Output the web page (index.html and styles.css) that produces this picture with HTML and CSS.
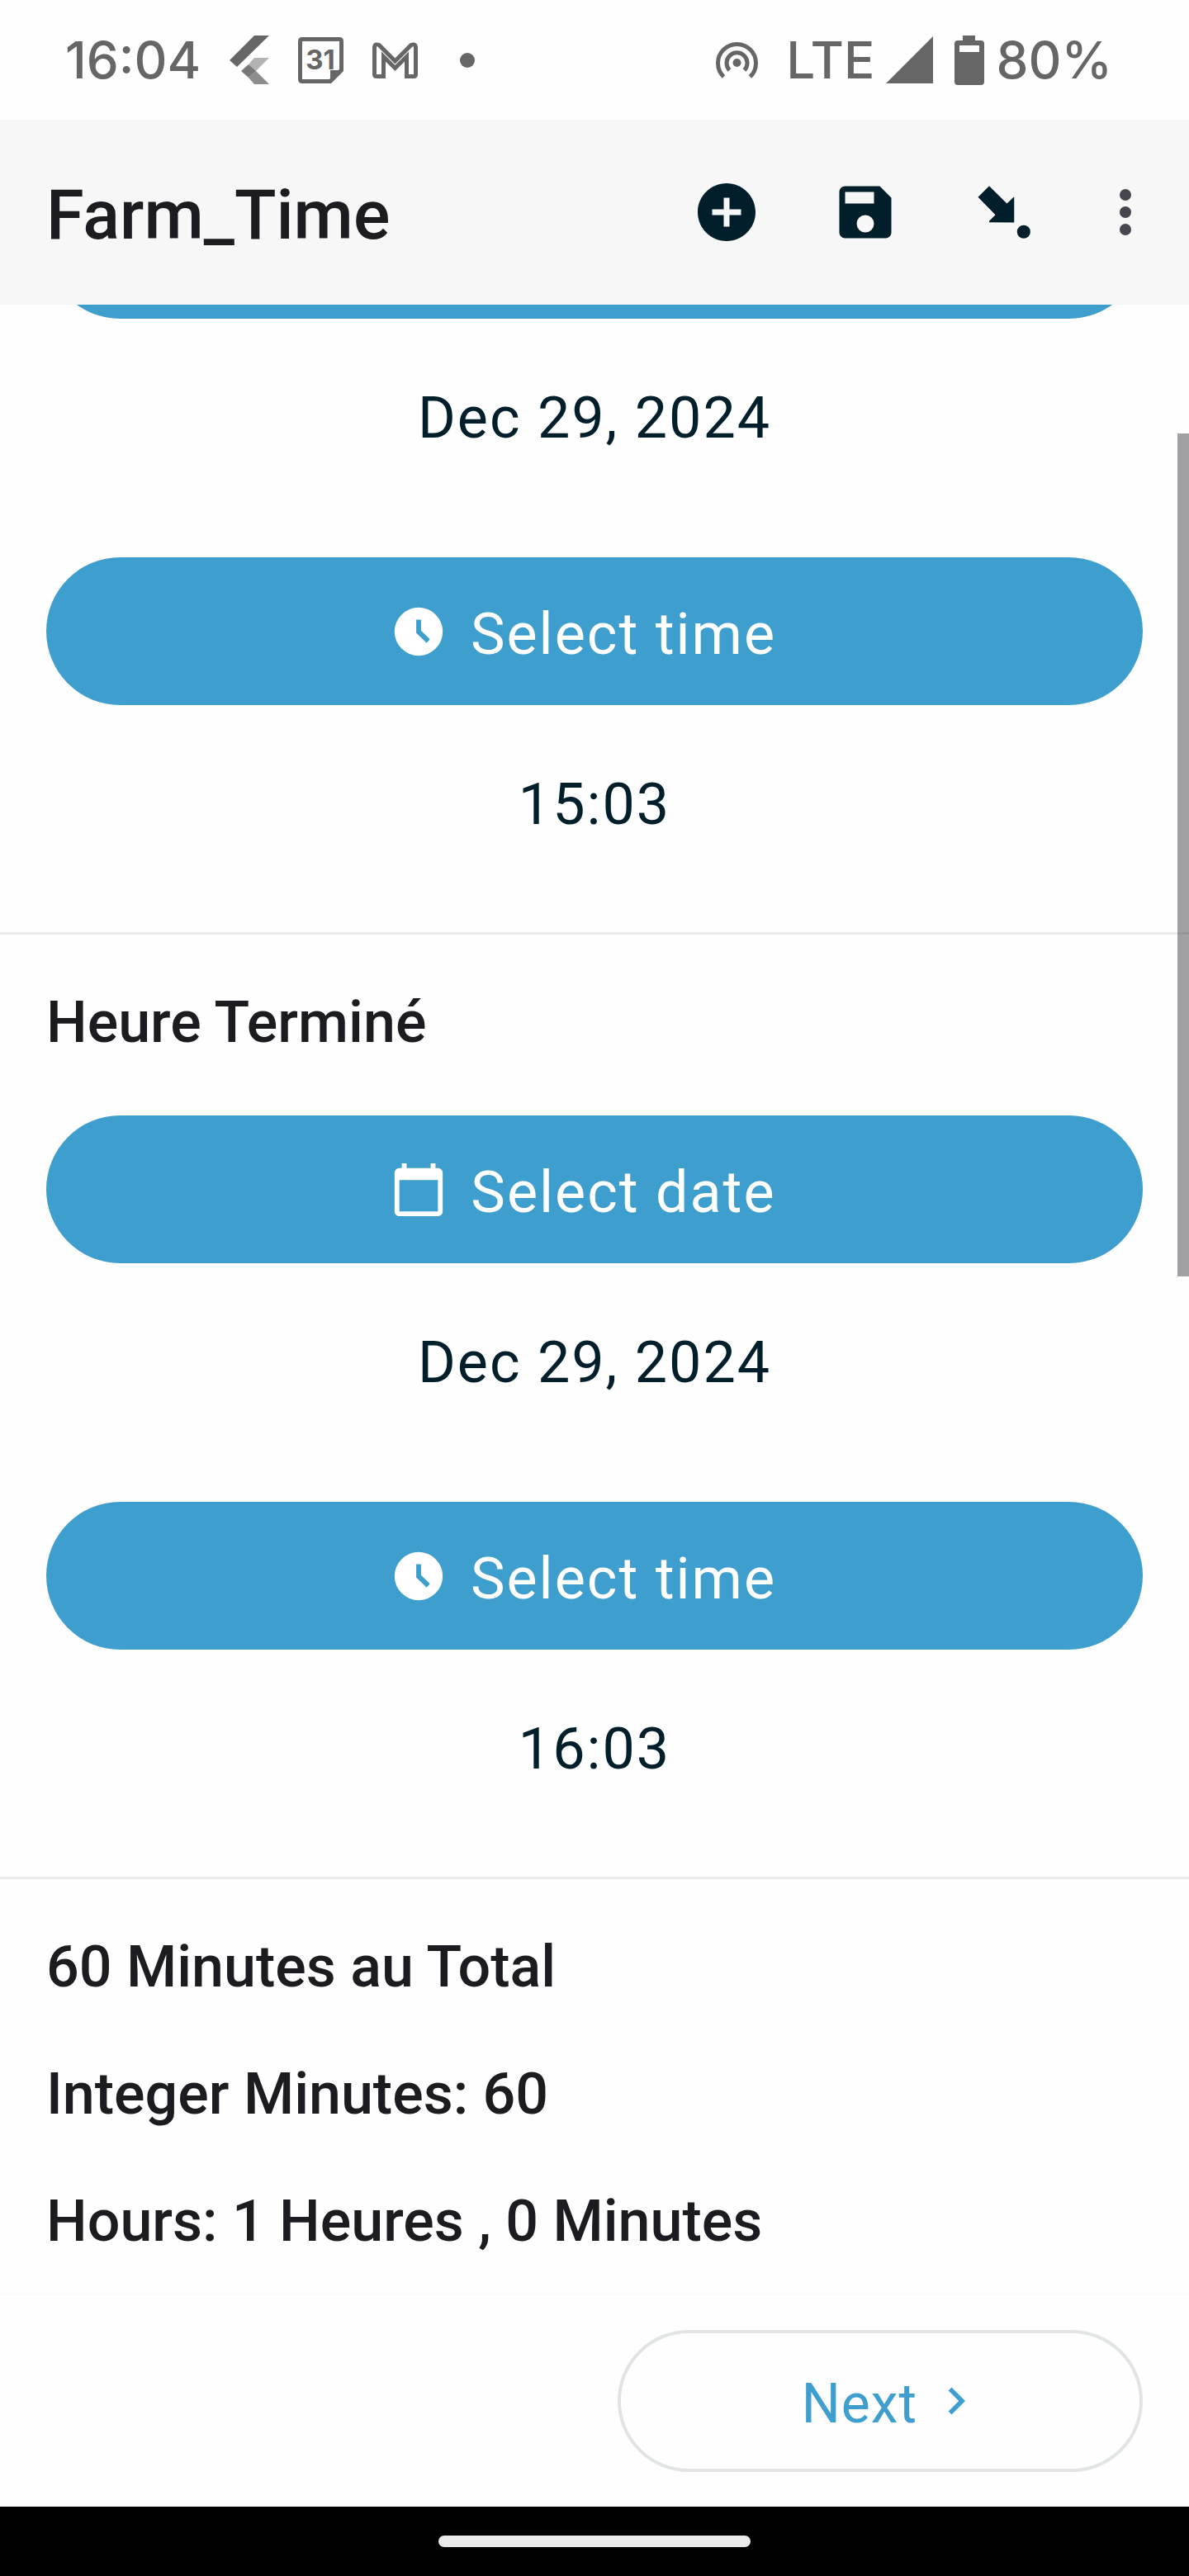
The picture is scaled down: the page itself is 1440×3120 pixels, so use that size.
FILE: index.html
```html
<!DOCTYPE html>
<html lang="fr">
<head>
  <meta charset="UTF-8">
  <meta name="viewport" content="width=device-width, initial-scale=1.0">
  <title>Farm_Time</title>
  <link rel="stylesheet" href="styles.css">
</head>

<body>
  <div class="status-bar">
    <div class="status-left">
      <span>16:04</span>
      <svg width="48" height="60" viewBox="0 0 48 60">
        <path d="M30 0h18L9 38 0 30z" fill="#666"/>
        <path d="M30 27h18L32 43l-9-8z" fill="#b3b3b3"/>
        <path d="M32 43l16 16H30l-7-8z" fill="#8c8c8c"/>
        <path d="M23 35l9 8-9 8-9-8z" fill="#777"/>
      </svg>
      <svg width="55" height="56" viewBox="0 0 55 56">
        <path d="M5 2.500h45q2.500 0 2.500 2.500v35L39 53.500H5Q2.500 53.500 2.500 51V5Q2.500 2.500 5 2.500z" fill="none" stroke="#666" stroke-width="5"/>
        <path d="M39 55V40h15z" fill="#666"/>
        <text x="27" y="39" class="cal-day">31</text>
      </svg>
      <svg width="55" height="44" viewBox="0 0 55 44">
        <path d="M13.500 41.500H5Q2.500 41.500 2.500 39V6Q3 1.500 8 3.500L27.500 23 47 3.500Q52 1.500 52.500 6v33q0 2.500-2.500 2.500h-8.500V17.500L27.500 31.500 13.500 17.500z" fill="none" stroke="#666" stroke-width="5"/>
      </svg>
      <span class="more-dot"></span>
    </div>
    <div class="status-right">
      <svg width="51" height="46" viewBox="0 0 51 46">
        <g fill="none" stroke="#666" stroke-width="5">
          <path d="M9.500 43A23 23 0 1 1 41.500 43"/>
          <path d="M16.500 35A12.500 12.500 0 1 1 34.500 35"/>
        </g>
        <circle cx="25.500" cy="26" r="5" fill="#666"/>
      </svg>
      <span class="network">LTE</span>
      <svg width="57" height="57" viewBox="0 0 57 57"><path d="M57 0v57H0z" fill="#666"/></svg>
      <svg class="battery" width="36" height="60" viewBox="0 0 36 60">
        <path fill-rule="evenodd" d="M10 0h15v6h7q4 0 4 4v46q0 4-4 4H4q-4 0-4-4V10q0-4 4-4h6zM6 12v8h24v-8z" fill="#666"/>
      </svg>
      <span>80%</span>
    </div>
  </div>

  <header class="app-bar">
    <h1>Farm_Time</h1>
    <button class="action" aria-label="Add">
      <svg viewBox="0 0 24 24"><path d="M12 2C6.480 2 2 6.480 2 12s4.480 10 10 10 10-4.480 10-10S17.520 2 12 2zm5 11h-4v4h-2v-4H7v-2h4V7h2v4h4v2z"/></svg>
    </button>
    <button class="action" aria-label="Save">
      <svg viewBox="0 0 24 24"><path fill-rule="evenodd" d="M17 3H5c-1.110 0-2 .9-2 2v14c0 1.100.89 2 2 2h14c1.100 0 2-.9 2-2V7zM5 5h10v4H5zM12 13a3 3 0 1 1 0 6 3 3 0 0 1 0-6z"/></svg>
    </button>
    <button class="action" aria-label="Go to prompt">
      <svg viewBox="0 0 24 24"><path d="M6.850 2.900L3 6.800l6 6.100-2.150 2.150v.45l8.650.1V6.800h-.2L13 9z"/><circle cx="18.800" cy="18.800" r="2.300"/></svg>
    </button>
    <button class="action overflow" aria-label="More options">
      <svg viewBox="0 0 24 24"><circle cx="12" cy="6" r="2"/><circle cx="12" cy="12" r="2"/><circle cx="12" cy="18" r="2"/></svg>
    </button>
  </header>

  <main class="questions">
    <div class="scrolled">
      <section>
        <button class="pill" aria-label="Start date"></button>
        <p class="value">Dec 29, 2024</p>
        <button class="pill">
          <svg viewBox="0 0 24 24"><path fill-rule="evenodd" d="M12 2a10 10 0 1 0 0 20 10 10 0 0 0 0-20zM11 7h2v4.600l3.700 3.600-1.400 1.500L11 12.500z"/></svg>
          <span class="label">Select time</span>
        </button>
        <p class="value">15:03</p>
      </section>

      <section>
        <h2>Heure Terminé</h2>
        <button class="pill">
          <svg viewBox="0 0 24 24"><path d="M20 3h-1V1h-2v2H7V1H5v2H4c-1.100 0-2 .9-2 2v16c0 1.100.9 2 2 2h16c1.100 0 2-.9 2-2V5c0-1.100-.9-2-2-2zm0 18H4V8h16v13z"/></svg>
          <span class="label">Select date</span>
        </button>
        <p class="value">Dec 29, 2024</p>
        <button class="pill">
          <svg viewBox="0 0 24 24"><path fill-rule="evenodd" d="M12 2a10 10 0 1 0 0 20 10 10 0 0 0 0-20zM11 7h2v4.600l3.700 3.600-1.400 1.500L11 12.500z"/></svg>
          <span class="label">Select time</span>
        </button>
        <p class="value">16:03</p>
      </section>

      <section class="totals">
        <h2>60 Minutes au Total</h2>
        <h2>Integer Minutes: 60</h2>
        <h2>Hours: 1 Heures , 0 Minutes</h2>
      </section>
    </div>
    <div class="scroll-thumb"></div>
  </main>

  <footer class="nav-row">
    <button class="next">
      <span class="label">Next</span>
      <svg viewBox="0 0 24 24"><path d="M10 6L8.590 7.410 13.170 12l-4.580 4.590L10 18l6-6z"/></svg>
    </button>
  </footer>

  <div class="gesture-bar"><span></span></div>
</body>
</html>
```

FILE: styles.css
```css
* {
  box-sizing: border-box;
}
body {
  margin: 0;
  min-height: 100vh;
  display: flex;
  flex-direction: column;
  font-family: Roboto, sans-serif;
  background: #fefefe;
  color: #1c1b1f;
}
button {
  border: none;
  padding: 0;
  font-family: inherit;
  cursor: pointer;
}
h1, h2, p {
  margin: 0;
}
svg {
  display: block;
  flex-shrink: 0;
}

/* Phone status bar */
.status-bar {
  height: 145px;
  padding: 0 93px 0 79px;
  display: flex;
  justify-content: space-between;
  align-items: center;
  font-family: Inter, sans-serif;
  font-size: 62px;
  font-weight: 500;
  color: #666;
}
.status-left {
  display: flex;
  align-items: center;
  gap: 35px;
}
.status-right {
  display: flex;
  align-items: center;
  gap: 14px;
}
.cal-day {
  font-size: 33px;
  font-weight: 700;
  text-anchor: middle;
  fill: #666;
}
.more-dot {
  width: 18px;
  height: 18px;
  margin-left: 16px;
  border-radius: 50%;
  background: #666;
}
.network {
  margin-left: 20px;
}
.battery {
  margin-left: 12px;
}

/* App bar */
.app-bar {
  height: 224px;
  padding: 0 14px 0 56px;
  display: flex;
  align-items: center;
  background: #f7f7f7;
}
.app-bar h1 {
  flex: 1;
  padding-top: 6px;
  font-size: 83px;
  font-weight: 500;
}
.action {
  width: 168px;
  height: 168px;
  display: flex;
  justify-content: center;
  align-items: center;
  background: none;
  fill: #001f2a;
}
.action svg {
  width: 84px;
  height: 84px;
}
.overflow {
  width: 126px;
  fill: #49454f;
}

/* Questions */
.questions {
  flex: 1;
  position: relative;
  overflow: hidden;
}
.scrolled {
  margin-top: -176px;
  padding-bottom: 48px;
}
section {
  padding: 0 56px;
}
section + section {
  padding-top: 65px;
  border-top: 3px solid #ebebeb;
}
h2 {
  font-size: 70px;
  line-height: 82px;
  font-weight: 500;
  margin-bottom: 72px;
}
.pill {
  width: 100%;
  height: 179px;
  margin-top: 14px;
  padding-right: 28px;
  border-radius: 90px;
  display: flex;
  justify-content: center;
  align-items: center;
  gap: 28px;
  background: #3e9ecd;
  color: #fff;
  fill: #fff;
  font-size: 70px;
  letter-spacing: 2px;
}
.pill svg {
  width: 70px;
  height: 70px;
}
.label {
  padding-top: 6px;
}
.value {
  padding: 79px 0 114px;
  font-size: 70px;
  line-height: 82px;
  letter-spacing: 2px;
  text-align: center;
  color: #001f2a;
}
.totals {
  display: flex;
  flex-direction: column;
  gap: 72px;
}
.totals h2 {
  margin: 0;
}
.scroll-thumb {
  position: absolute;
  top: 156px;
  right: 0;
  width: 14px;
  height: 1021px;
  background: rgba(28, 27, 31, 0.41);
}

/* Bottom navigation */
.nav-row {
  padding: 42px 56px;
  display: grid;
  grid-template-columns: 1fr 1fr;
  gap: 56px;
  background: #fefefe;
  box-shadow: 0 -1px 6px rgba(0, 0, 0, 0.04);
  z-index: 1;
}
.next {
  grid-column: 2;
  height: 172px;
  padding-left: 30px;
  border: 4px solid #e0e4e4;
  border-radius: 86px;
  display: flex;
  justify-content: center;
  align-items: center;
  gap: 14px;
  background: none;
  color: #3e9ecd;
  fill: #3e9ecd;
  font-size: 66px;
  letter-spacing: 1px;
}
.next svg {
  width: 66px;
  height: 66px;
}
.gesture-bar {
  height: 84px;
  display: flex;
  justify-content: center;
  align-items: center;
  background: #000;
}
.gesture-bar span {
  width: 378px;
  height: 14px;
  border-radius: 7px;
  background: #ebebeb;
}
```
